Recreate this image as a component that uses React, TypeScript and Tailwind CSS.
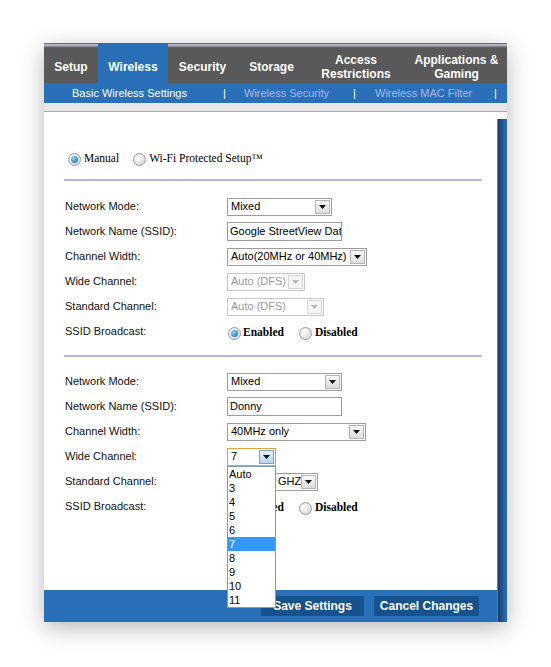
import React from 'react';

const sans = { fontFamily: '"Liberation Sans", Arial, sans-serif' };
const serif = { fontFamily: '"Liberation Serif", "Times New Roman", serif' };

const Arrow: React.FC<{ disabled?: boolean }> = ({ disabled }) => (
  <svg width="7" height="4" viewBox="0 0 7 4">
    <path d="M0 0h7L3.5 4z" fill={disabled ? '#b8b8b8' : '#111'} />
  </svg>
);

const Select: React.FC<{
  value: string;
  width: number;
  disabled?: boolean;
  focused?: boolean;
  indent?: number;
  children?: React.ReactNode;
}> = ({ value, width, disabled, focused, indent = 3, children }) => (
  <div
    className={`relative h-[18px] flex items-center bg-white border ${
      focused ? 'border-[#e3a23e]' : disabled ? 'border-[#c8c8c8]' : 'border-[#9d9d9d]'
    }`}
    style={{ width }}
  >
    <span
      className={`flex-1 text-[11px] leading-none whitespace-nowrap overflow-hidden ${
        disabled ? 'text-[#9a9a9a]' : 'text-black'
      }`}
      style={{ paddingLeft: indent }}
    >
      {value}
    </span>
    <span
      className={`mr-[1px] w-[15px] h-[14px] flex items-center justify-center border ${
        focused
          ? 'border-[#7aa2cf] bg-[linear-gradient(to_bottom,#e6f1ff,#b6d4f4)]'
          : disabled
          ? 'border-[#d6d6d6] bg-[#f4f4f4]'
          : 'border-[#b4b4b4] bg-[linear-gradient(to_bottom,#fafafa,#dcdcdc)]'
      }`}
    >
      <Arrow disabled={disabled} />
    </span>
    {children}
  </div>
);

const TextInput: React.FC<{ value: string; width: number }> = ({ value, width }) => (
  <div
    className="h-[19px] flex items-center border border-[#9d9d9d] bg-white overflow-hidden"
    style={{ width }}
  >
    <span className="pl-[2px] text-[11px] leading-none text-black whitespace-nowrap">{value}</span>
  </div>
);

const Radio: React.FC<{ checked?: boolean }> = ({ checked }) => (
  <span className="w-[13px] h-[13px] rounded-full border border-[#9b9b9b] bg-[radial-gradient(circle_at_35%_35%,#ffffff,#cfcfcf)] flex items-center justify-center shrink-0">
    {checked && (
      <span className="w-[7px] h-[7px] rounded-full bg-[radial-gradient(circle_at_35%_35%,#8ad6ff,#0b5aa6)]" />
    )}
  </span>
);

const Row: React.FC<{ label: string; children: React.ReactNode }> = ({ label, children }) => (
  <div className="h-[25px] flex items-center">
    <div className="w-[162px] text-[11px] text-[#111]" style={sans}>
      {label}
    </div>
    {children}
  </div>
);

const Broadcast: React.FC = () => (
  <div className="flex items-center pt-[3px] text-[11.5px] font-bold text-black" style={serif}>
    <span className="ml-[1px]">
      <Radio checked />
    </span>
    <span className="ml-[2px]">Enabled</span>
    <span className="ml-[15px]">
      <Radio />
    </span>
    <span className="ml-[3px]">Disabled</span>
  </div>
);

const Separator: React.FC<{ className?: string }> = ({ className }) => (
  <div className={`ml-[20px] w-[418px] h-[2px] bg-[#b8b5e2] ${className ?? ''}`} />
);

const channels = ['Auto', '3', '4', '5', '6', '7', '8', '9', '10', '11'];

const tabs: { label: React.ReactNode; w: number; active?: boolean }[] = [
  { label: 'Setup', w: 54 },
  { label: 'Wireless', w: 70, active: true },
  { label: 'Security', w: 69 },
  { label: 'Storage', w: 69 },
  { label: <>Access<br />Restrictions</>, w: 100 },
  { label: <>Applications &amp;<br />Gaming</>, w: 101 },
];

export default function App() {
  return (
    <div className="min-h-[667px] bg-white pt-[43px]" style={sans}>
      <div className="ml-[44px] w-[463px] shadow-[0_6px_22px_rgba(0,0,0,0.28)]">
        {/* top navigation */}
        <div className="flex h-[40px]">
          {tabs.map((t, i) =>
            t.active ? (
              <div
                key={i}
                className="bg-[#2a70b8] flex items-center justify-center text-white text-[12px] font-bold pt-[8px]"
                style={{ width: t.w }}
              >
                {t.label}
              </div>
            ) : (
              <div key={i} className="flex flex-col" style={{ width: t.w }}>
                <div className="h-[5px] bg-[linear-gradient(to_bottom,#6c6c74_0px,#6c6c74_1px,#babacb_1px,#a4a4b4_3px,#6a6a6a_4px,#595959_5px)]" />
                <div className="flex-1 bg-[#595959] flex items-center justify-center text-center text-white text-[12px] font-bold leading-[14px] pt-[3px]">
                  {t.label}
                </div>
              </div>
            ),
          )}
        </div>

        {/* sub navigation */}
        <div className="h-[20px] bg-[#2a70b8] flex items-center pl-[28px] text-[11px] leading-none">
          <span className="w-[151px] text-white">Basic Wireless Settings</span>
          <span className="w-[21px] text-white">|</span>
          <span className="w-[109px] text-[#a7b6ee]">Wireless Security</span>
          <span className="w-[22px] text-white">|</span>
          <span className="w-[119px] text-[#a7b6ee]">Wireless MAC Filter</span>
          <span className="text-white">|</span>
        </div>

        <div className="h-[9px] bg-[#e6e6e6] border-b border-[#a8a8a8]" />

        <div className="flex">
          <div className="flex-1 flex flex-col">
            {/* content */}
            <div className="h-[478px] bg-white pt-[39px]">
              <div className="h-[16px] flex items-center pl-[24px] text-[11.5px] text-black" style={serif}>
                <Radio checked />
                <span className="ml-[3px]">Manual</span>
                <span className="ml-[14px]">
                  <Radio />
                </span>
                <span className="ml-[3px]">Wi-Fi Protected Setup™</span>
              </div>

              <Separator className="mt-[12px]" />

              <div className="mt-[13px] pl-[21px]">
                <Row label="Network Mode:">
                  <Select value="Mixed" width={105} />
                </Row>
                <Row label="Network Name (SSID):">
                  <TextInput value="Google StreetView Dat" width={115} />
                </Row>
                <Row label="Channel Width:">
                  <Select value="Auto(20MHz or 40MHz)" width={140} />
                </Row>
                <Row label="Wide Channel:">
                  <Select value="Auto (DFS)" width={78} disabled />
                </Row>
                <Row label="Standard Channel:">
                  <Select value="Auto (DFS)" width={97} disabled />
                </Row>
                <Row label="SSID Broadcast:">
                  <Broadcast />
                </Row>
              </div>

              <Separator className="mt-[11px]" />

              <div className="mt-[12px] pl-[21px]">
                <Row label="Network Mode:">
                  <Select value="Mixed" width={115} />
                </Row>
                <Row label="Network Name (SSID):">
                  <TextInput value="Donny" width={115} />
                </Row>
                <Row label="Channel Width:">
                  <Select value="40MHz only" width={139} />
                </Row>
                <Row label="Wide Channel:">
                  <Select value="7" width={49} focused>
                    <div className="absolute left-[-1px] top-[17px] z-10 w-[49px] bg-white border border-[#7f9db9]">
                      {channels.map((c) => (
                        <div
                          key={c}
                          className={`h-[14px] pl-[1px] text-[11px] leading-[14px] ${
                            c === '7' ? 'bg-[#3399ff] text-white' : 'text-black'
                          }`}
                        >
                          {c}
                        </div>
                      ))}
                    </div>
                  </Select>
                </Row>
                <Row label="Standard Channel:">
                  <Select value="GHZ" width={91} indent={50} />
                </Row>
                <Row label="SSID Broadcast:">
                  <Broadcast />
                </Row>
              </div>
            </div>

            {/* footer */}
            <div className="h-[32px] bg-[#2a70b8] flex items-center justify-end gap-[10px] pr-[18px]">
              <button className="w-[103px] h-[20px] bg-[#16528e] text-white text-[12px] font-bold">
                Save Settings
              </button>
              <button className="w-[105px] h-[20px] bg-[#16528e] text-white text-[12px] font-bold">
                Cancel Changes
              </button>
            </div>
          </div>

          {/* right edge bar */}
          <div className="w-[10px] flex flex-col">
            <div className="h-[7px] bg-white" />
            <div className="flex-1 bg-[linear-gradient(to_right,#7c7c7c_0px,#7c7c7c_1px,#1c3c68_1px,#2a6db5_9px)]" />
          </div>
        </div>
      </div>
    </div>
  );
}
